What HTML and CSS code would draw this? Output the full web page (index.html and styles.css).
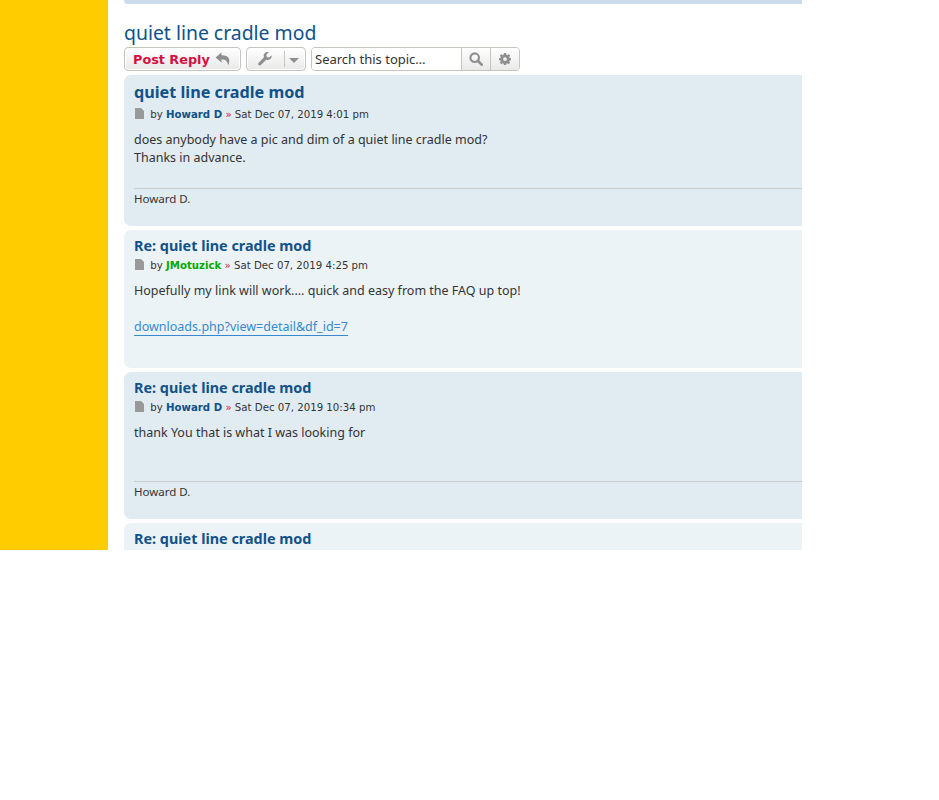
FILE: index.html
```html
<!DOCTYPE html>
<html lang="en">
<head>
    <meta charset="UTF-8">
    <title>quiet line cradle mod</title>
    <link rel="stylesheet" href="styles.css">
</head>
<body>
    <div class="page">
        <div class="sidebar"></div>
        <div class="content">
            <div class="top-strip"></div>
            <h2 class="topic-title">quiet line cradle mod</h2>
            <div class="action-bar">
                <a href="#" class="btn btn-reply">Post Reply
                    <svg class="icon icon-reply" viewBox="0 0 16 14"><path d="M6.5 0.5 0.5 5.5 6.5 10.5V7.4C10 7.3 12.2 8.3 13.2 13.2 15.6 8 14.6 3.2 6.5 3.2Z"/></svg>
                </a>
                <div class="btn btn-tools">
                    <svg class="icon icon-wrench" viewBox="0 0 16 16"><path d="M15.4 3.6 12.6 6.3 10 5.7 9.5 3.2 12.3 0.4C10.3-0.3 8.3 0.4 7.2 1.9 6.3 3.2 6.3 4.8 6.8 6.1L0.8 12.2C-0.1 13.1-0.1 14.2 0.6 14.9 1.4 15.7 2.6 15.6 3.3 14.9L9.4 8.8C11 9.5 12.7 9.2 14 8.1 15.4 6.9 15.9 5.2 15.4 3.6Z"/></svg>
                    <span class="tools-sep"></span>
                    <span class="caret"></span>
                </div>
                <div class="search-box">
                    <input class="search-input" type="text" placeholder="Search this topic…">
                    <span class="search-btn">
                        <svg class="icon icon-search" viewBox="0 0 16 16"><circle cx="6.5" cy="6.5" r="4.9" fill="none" stroke-width="2.4"/><path d="M10 10 14.5 14.5" fill="none" stroke-width="3" stroke-linecap="round"/></svg>
                    </span>
                    <span class="search-btn">
                        <svg class="icon icon-gear" viewBox="0 0 16 16"><path fill-rule="evenodd" d="M6.6 0H9.4L9.8 2.2 11.1 2.8 13 1.5 14.9 3.4 13.6 5.2 14.2 6.6 16 6.9V9.5L14.2 9.9 13.6 11.2 14.8 13 12.9 14.9 11.1 13.6 9.8 14.2 9.4 16H6.6L6.2 14.2 4.9 13.6 3 14.9 1.1 13 2.4 11.2 1.8 9.9 0 9.5V6.9L1.8 6.6 2.4 5.2 1.1 3.4 3 1.5 4.9 2.8 6.2 2.2ZM8 5.6A2.5 2.5 0 1 0 8 10.6 2.5 2.5 0 1 0 8 5.6Z"/></svg>
                    </span>
                </div>
            </div>

            <div class="post bg-dark post-first">
                <h3 class="post-title post-title-big">quiet line cradle mod</h3>
                <p class="post-meta">
                    <svg class="icon icon-file" viewBox="0 0 9 11"><path d="M0 0H6L9 3V11H0Z"/></svg>
                    by <a href="#" class="author">Howard D</a> <span class="raquo">»</span> Sat Dec 07, 2019 4:01 pm
                </p>
                <div class="post-text">does anybody have a pic and dim of a quiet line cradle mod?<br>Thanks in advance.</div>
                <div class="signature">Howard D.</div>
            </div>

            <div class="post bg-light post-second">
                <h3 class="post-title">Re: quiet line cradle mod</h3>
                <p class="post-meta">
                    <svg class="icon icon-file" viewBox="0 0 9 11"><path d="M0 0H6L9 3V11H0Z"/></svg>
                    by <a href="#" class="author author-green">JMotuzick</a> <span class="raquo">»</span> Sat Dec 07, 2019 4:25 pm
                </p>
                <div class="post-text">Hopefully my link will work.... quick and easy from the FAQ up top!<br><br><a href="#" class="post-link">downloads.php?view=detail&amp;df_id=7</a></div>
            </div>

            <div class="post bg-dark post-third">
                <h3 class="post-title">Re: quiet line cradle mod</h3>
                <p class="post-meta">
                    <svg class="icon icon-file" viewBox="0 0 9 11"><path d="M0 0H6L9 3V11H0Z"/></svg>
                    by <a href="#" class="author">Howard D</a> <span class="raquo">»</span> Sat Dec 07, 2019 10:34 pm
                </p>
                <div class="post-text">thank You that is what I was looking for</div>
                <div class="signature">Howard D.</div>
            </div>

            <div class="post bg-light post-last">
                <h3 class="post-title">Re: quiet line cradle mod</h3>
            </div>
        </div>
    </div>
</body>
</html>
```

FILE: styles.css
```css
* {
    margin: 0;
    padding: 0;
    box-sizing: border-box;
}

body {
    background: #ffffff;
    color: #333333;
    font-family: "Noto Sans", sans-serif;
}

a {
    text-decoration: none;
}

.page {
    display: flex;
    width: 802px;
    height: 550px;
    overflow: hidden;
}

.sidebar {
    width: 108px;
    flex-shrink: 0;
    background: #ffcc00;
}

.content {
    flex: 1;
    min-width: 0;
    padding-left: 16px;
    overflow: hidden;
}

.top-strip {
    height: 4px;
    margin-right: -10px;
    background: #cadceb;
    border-radius: 0 0 7px 7px;
}

.topic-title {
    margin-top: 15px;
    height: 28px;
    font-size: 19.4px;
    line-height: 27px;
    font-weight: 400;
    color: #105289;
}

.action-bar {
    display: flex;
    gap: 5px;
    height: 24px;
    margin-bottom: 4px;
}

.btn {
    display: flex;
    align-items: center;
    height: 24px;
    border: 1px solid #c7c3bf;
    border-radius: 4px;
    background: linear-gradient(#ffffff, #e9e9e9);
    box-shadow: 0 0 0 1px #ffffff inset;
}

.btn-reply {
    width: 117px;
    padding-left: 8px;
    font-family: "DejaVu Sans", sans-serif;
    font-size: 12.8px;
    font-weight: 700;
    color: #d31141;
}

.btn-tools {
    width: 60px;
    padding-left: 11px;
}

.icon {
    display: block;
    flex-shrink: 0;
    fill: #8f8f8f;
}

.icon-reply {
    width: 16px;
    height: 14px;
    margin-left: 5px;
}

.icon-wrench {
    width: 14px;
    height: 14px;
}

.tools-sep {
    width: 1px;
    height: 16px;
    margin-left: 12px;
    background: #c7c3bf;
}

.caret {
    margin-left: 4px;
    margin-top: 2px;
    border-left: 5px solid transparent;
    border-right: 5px solid transparent;
    border-top: 5px solid #8f8f8f;
}

.search-box {
    display: flex;
    height: 24px;
    border: 1px solid #c7c3bf;
    border-radius: 4px;
    overflow: hidden;
    background: #ffffff;
}

.search-input {
    width: 149px;
    height: 22px;
    padding-left: 3px;
    border: none;
    outline: none;
    font-family: "Noto Sans", sans-serif;
    font-size: 13px;
    color: #333333;
}

.search-input::placeholder {
    color: #333333;
    opacity: 1;
}

.search-btn {
    display: flex;
    align-items: center;
    justify-content: center;
    width: 29px;
    border-left: 1px solid #c7c3bf;
    background: linear-gradient(#ffffff, #e9e9e9);
}

.icon-search {
    width: 14px;
    height: 14px;
    stroke: #8f8f8f;
}

.icon-gear {
    width: 12px;
    height: 12px;
}

.post {
    margin-right: -10px;
    margin-bottom: 4px;
    padding: 0 10px;
    border-radius: 7px;
    overflow: hidden;
}

.bg-dark {
    background: #e1ebf2;
}

.bg-light {
    background: #ecf3f7;
}

.post-first {
    height: 151px;
}

.post-second {
    height: 138px;
}

.post-third {
    height: 147px;
}

.post-last {
    height: 40px;
}

.post-title {
    padding-top: 6px;
    font-size: 14.4px;
    line-height: 20px;
    font-weight: 700;
    color: #105289;
}

.post-title-big {
    padding-top: 6px;
    font-size: 16.2px;
    line-height: 22px;
}

.post-meta {
    height: 16px;
    margin-top: 2px;
    font-family: "DejaVu Sans", sans-serif;
    font-size: 10.2px;
    line-height: 16px;
    color: #333333;
}

.post-first .post-meta {
    margin-top: 4px;
}

.icon-file {
    display: inline-block;
    width: 9px;
    height: 11px;
    margin-left: 1px;
    margin-right: 3px;
    vertical-align: -1px;
    fill: #999999;
}

.author {
    font-weight: 700;
    color: #105289;
}

.author-green {
    color: #00aa00;
}

.raquo {
    color: #d31141;
}

.post-text {
    margin-top: 8px;
    font-size: 12.5px;
    line-height: 18px;
}

.post-first .post-text,
.post-third .post-text {
    height: 57px;
}

.post-link {
    color: #368ad2;
    border-bottom: 1px solid #368ad2;
}

.signature {
    padding-top: 2px;
    border-top: 1px solid #cccccc;
    font-size: 11.5px;
    line-height: 16px;
}
```
